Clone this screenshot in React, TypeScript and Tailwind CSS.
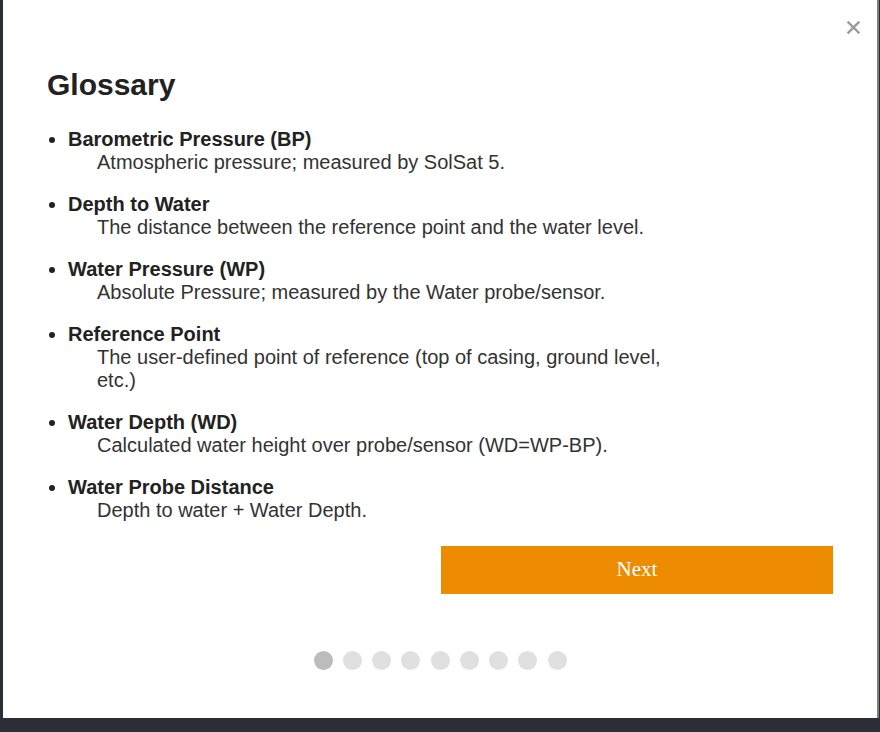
import React from 'react';

interface Term {
  title: string;
  text: string;
}

const terms: Term[] = [
  { title: 'Barometric Pressure (BP)', text: 'Atmospheric pressure; measured by SolSat 5.' },
  { title: 'Depth to Water', text: 'The distance between the reference point and the water level.' },
  { title: 'Water Pressure (WP)', text: 'Absolute Pressure; measured by the Water probe/sensor.' },
  {
    title: 'Reference Point',
    text: 'The user-defined point of reference (top of casing, ground level, etc.)',
  },
  { title: 'Water Depth (WD)', text: 'Calculated water height over probe/sensor (WD=WP-BP).' },
  { title: 'Water Probe Distance', text: 'Depth to water + Water Depth.' },
];

const App: React.FC = () => {
  const active = 0;

  return (
    <div className="w-[880px] h-[732px] bg-[#2b2e37] overflow-hidden">
      <div
        className="relative ml-[3px] w-[876px] h-[718px] bg-white border-r-2 border-[#7d7d7d] px-[44px] pt-[67px]"
        style={{ fontFamily: '"Liberation Sans", Arial, sans-serif' }}
      >
        {/* close */}
        <button className="absolute top-[20px] right-[17px] w-[14px] h-[14px] flex items-center justify-center">
          <svg width="13" height="13" viewBox="0 0 13 13">
            <path d="M1.5 1.5 L11.5 11.5 M11.5 1.5 L1.5 11.5" stroke="#9a9a9a" strokeWidth="2.4" strokeLinecap="square" />
          </svg>
        </button>

        <h1 className="text-[30px] leading-[36px] font-bold text-[#222]">Glossary</h1>

        <ul className="mt-[25px] w-[640px] pl-[21px] list-disc text-[20px] leading-[23px]">
          {terms.map((t) => (
            <li key={t.title} className="mb-[19px] text-[#222] marker:text-[#222]">
              <div className="font-bold">{t.title}</div>
              <div className="pl-[29px] text-[#333]">{t.text}</div>
            </li>
          ))}
        </ul>

        <div className="flex justify-end mt-[24px]">
          <button
            className="w-[392px] h-[48px] bg-[#ee8c00] text-white text-[21px]"
            style={{ fontFamily: '"Liberation Serif", "Times New Roman", serif' }}
          >
            Next
          </button>
        </div>

        <div className="flex justify-center gap-[10.25px] mt-[57px]">
          {Array.from({ length: 9 }).map((_, i) => (
            <span
              key={i}
              className={
                i === active
                  ? 'block w-[19px] h-[19px] rounded-full bg-[#bcbcbc]'
                  : 'block w-[19px] h-[19px] rounded-full bg-[#e0e0e0]'
              }
            />
          ))}
        </div>
      </div>
    </div>
  );
};

export default App;
